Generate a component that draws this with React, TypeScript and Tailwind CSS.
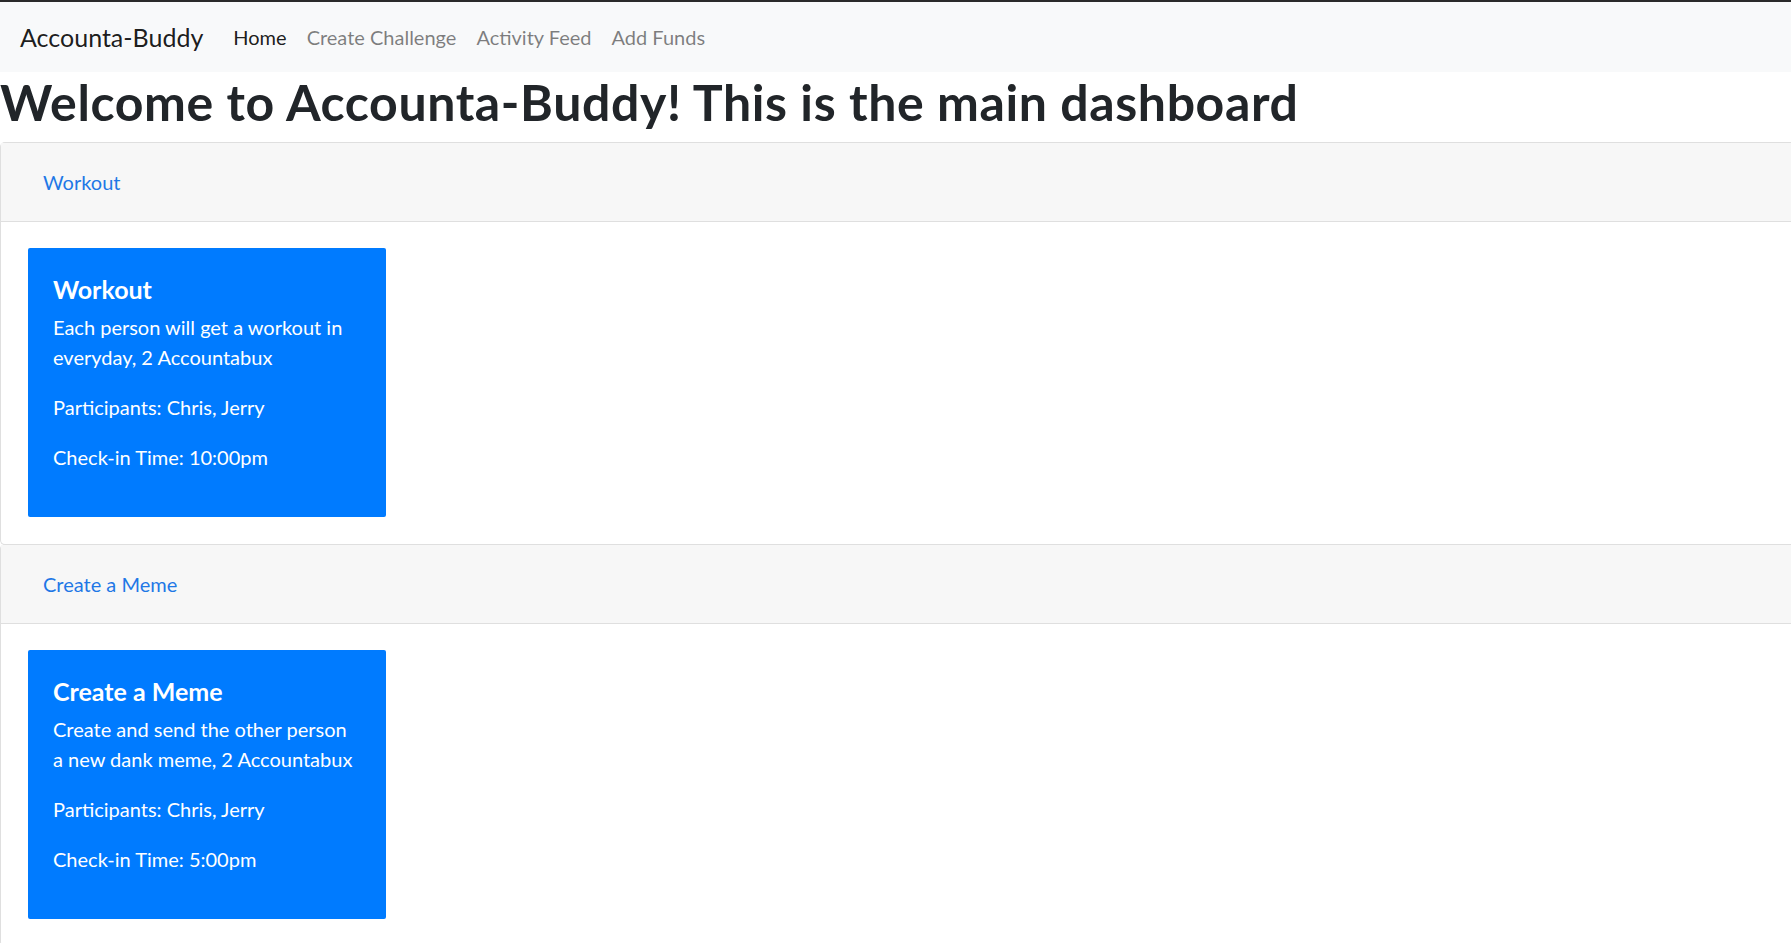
import React from 'react';

type Challenge = {
  name: string;
  description: string;
  participants: string;
  checkIn: string;
};

const challenges: Challenge[] = [
  {
    name: 'Workout',
    description: 'Each person will get a workout in everyday, 2 Accountabux',
    participants: 'Chris, Jerry',
    checkIn: '10:00pm',
  },
  {
    name: 'Create a Meme',
    description: 'Create and send the other person a new dank meme, 2 Accountabux',
    participants: 'Chris, Jerry',
    checkIn: '5:00pm',
  },
];

const navLinks = ['Home', 'Create Challenge', 'Activity Feed', 'Add Funds'];

const ChallengeCard: React.FC<{ challenge: Challenge }> = ({ challenge }) => (
  <div className="border border-r-0 border-[#dfdfdf] rounded-l-[5px] -mt-px first:mt-0">
    <div className="h-[79px] bg-[#f7f7f7] border-b border-[#dfdfdf] flex items-center pl-[42px]">
      <button className="text-[20px] text-[#1f78e6] leading-[30px]">{challenge.name}</button>
    </div>
    <div className="pl-[27px] pt-[26px] pb-[27px]">
      <div className="w-[358px] bg-[#007bff] text-white rounded-[2px] px-[25px] pt-[26px] pb-[25px]">
        <h5 className="text-[25px] font-bold leading-[30px] mb-[8px]">{challenge.name}</h5>
        <p className="text-[20px] leading-[30px] mb-[20px]">{challenge.description}</p>
        <p className="text-[20px] leading-[30px] mb-[20px]">Participants: {challenge.participants}</p>
        <p className="text-[20px] leading-[30px] mb-[20px]">Check-in Time: {challenge.checkIn}</p>
      </div>
    </div>
  </div>
);

export default function App() {
  return (
    <div className="min-h-screen bg-white overflow-hidden font-['Lato',sans-serif] text-[#212529]">
      <nav className="h-[72px] border-t-2 border-[#2a2a2a] bg-[#f8f9fa] flex items-center px-[20px]">
        <a className="text-[25px] text-black/90 mr-[20px] leading-[38px]">Accounta-Buddy</a>
        <div className="flex items-center">
          {navLinks.map((link, idx) => (
            <a
              key={link}
              className={`px-[10px] text-[20px] leading-[30px] ${idx === 0 ? 'text-black/90' : 'text-black/50'}`}
            >
              {link}
            </a>
          ))}
        </div>
      </nav>
      <h1 className="text-[50px] font-bold tracking-[0.6px] leading-[60px] mb-[10px]">
        Welcome to Accounta-Buddy! This is the main dashboard
      </h1>
      <div>
        {challenges.map(c => (
          <ChallengeCard key={c.name} challenge={c} />
        ))}
      </div>
    </div>
  );
}
